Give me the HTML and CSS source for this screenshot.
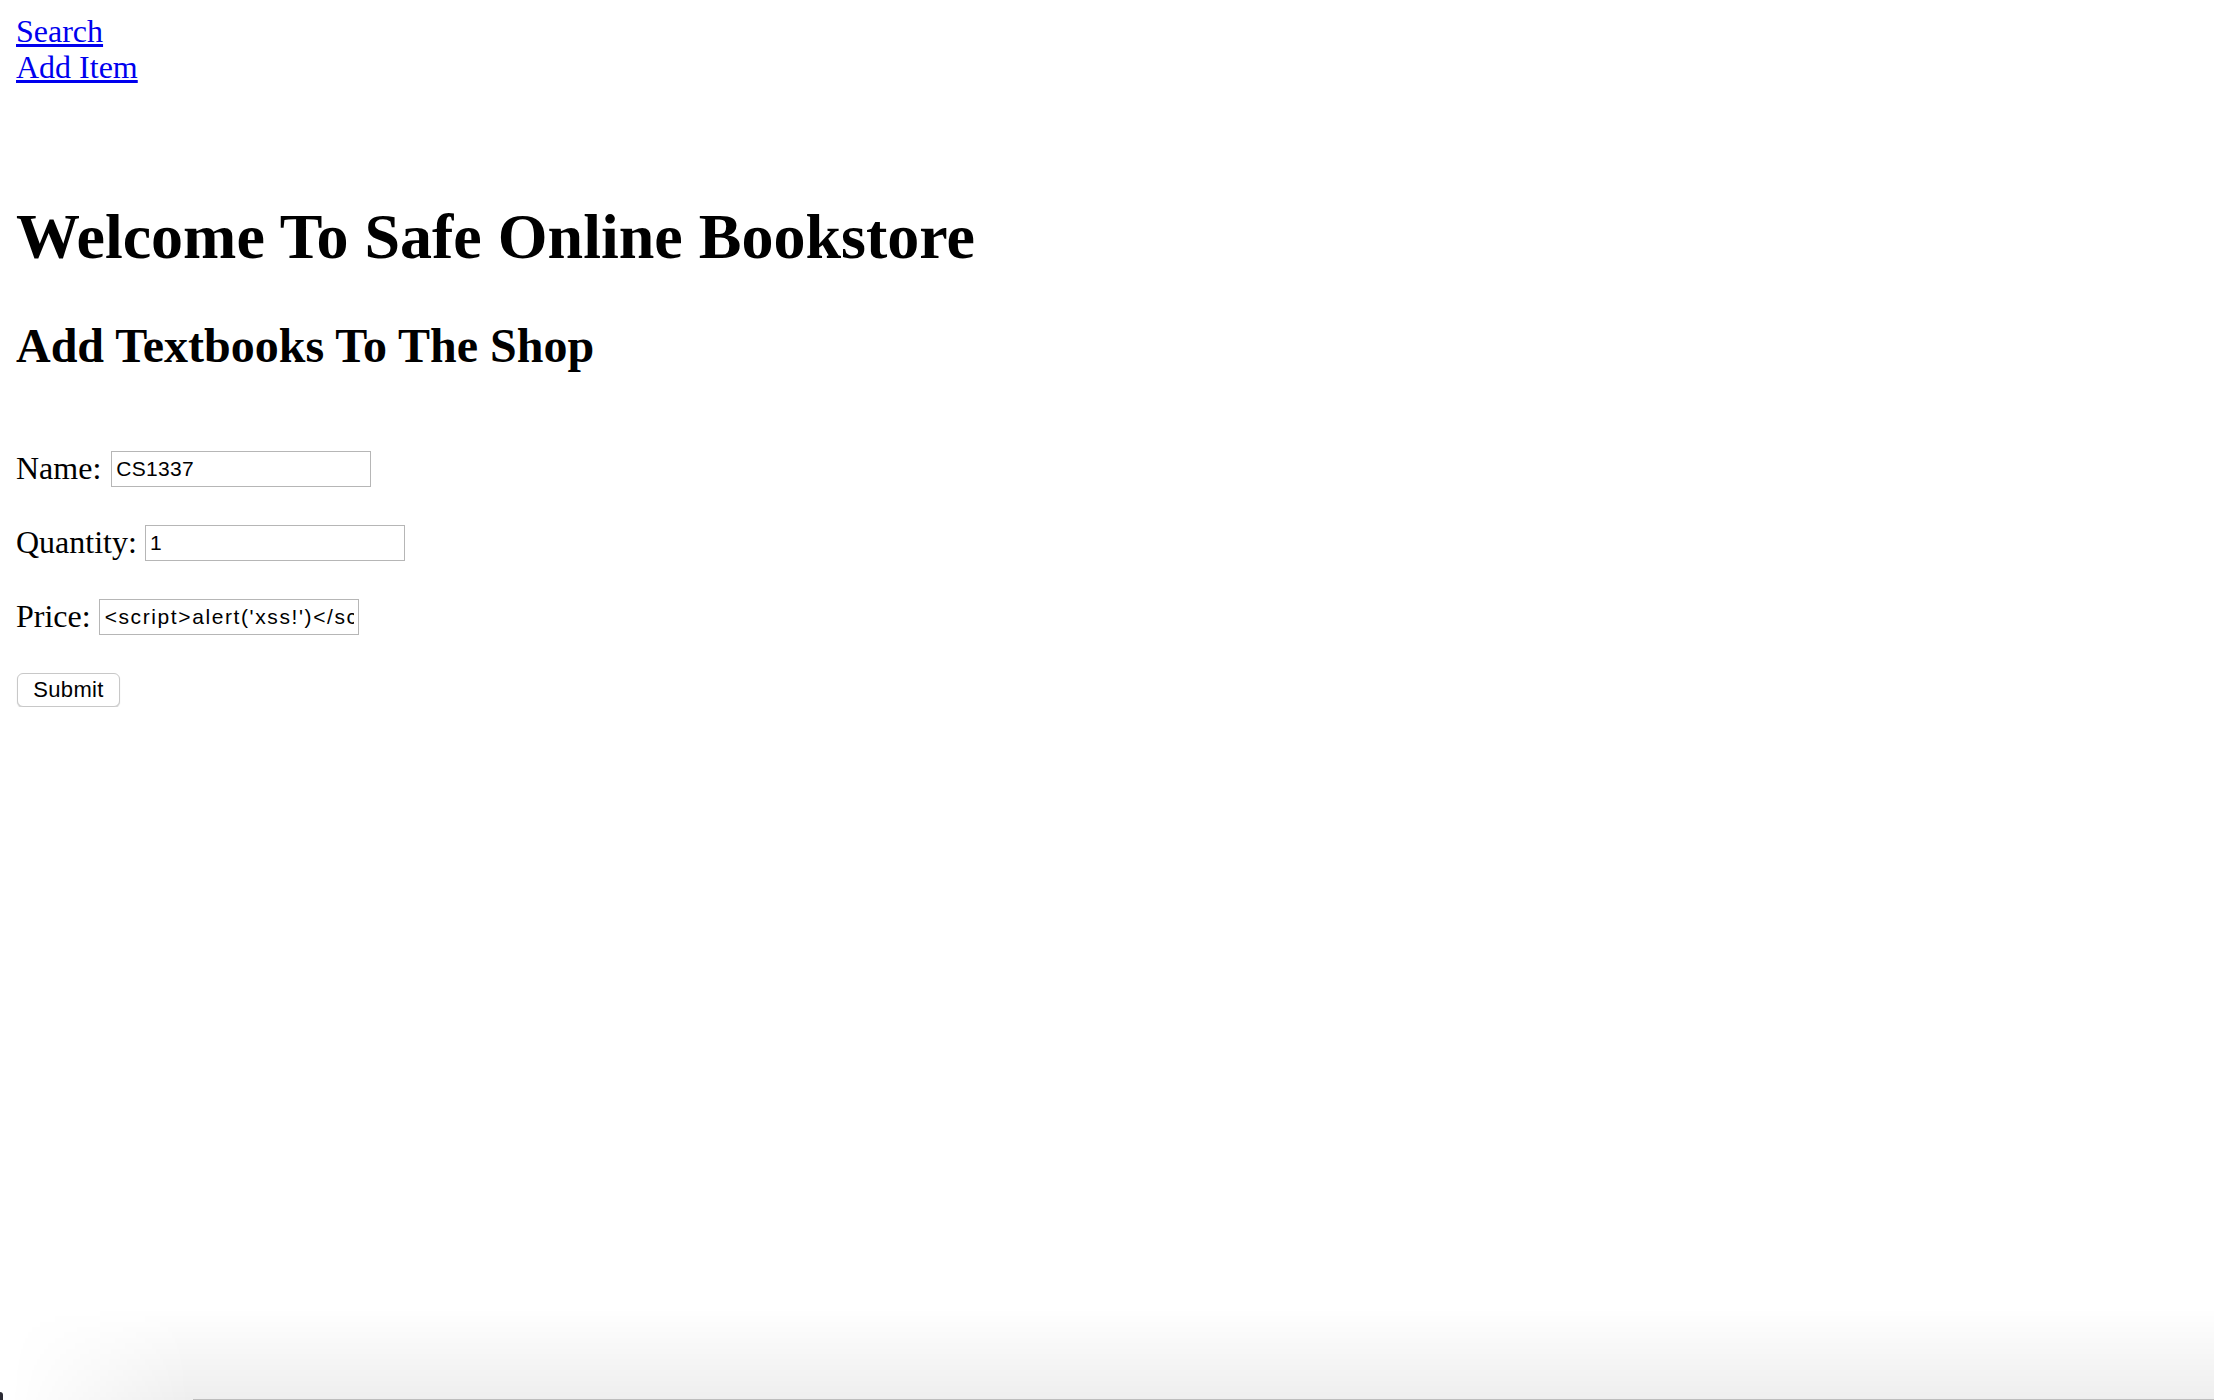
FILE: index.html
```html
<!DOCTYPE html>
<html lang="en">
<head>
<meta charset="utf-8">
<title>Safe Online Bookstore</title>
<link rel="stylesheet" href="styles.css">
</head>
<body>
<nav class="nav">
  <a class="nav-link" href="#">Search</a>
  <a class="nav-link" href="#">Add Item</a>
</nav>
<h1 class="title">Welcome To Safe Online Bookstore</h1>
<h2 class="subtitle">Add Textbooks To The Shop</h2>
<form class="form">
  <div class="row row-name"><label class="label" for="name">Name:</label><input class="field" id="name" type="text" value="CS1337"></div>
  <div class="row"><label class="label" for="qty">Quantity:</label><input class="field" id="qty" type="text" value="1"></div>
  <div class="row"><label class="label" for="price">Price:</label><input class="field field-code" id="price" type="text" value="&lt;script&gt;alert('xss!')&lt;/script&gt;"></div>
  <button class="submit" type="button">Submit</button>
</form>
<div class="dock-shadow"><div class="dock-line"></div></div>
<div class="corner"></div>
</body>
</html>
```
FILE: styles.css
```css
html, body {
  background: #ffffff;
}
body {
  margin: 13px 16px;
  font-family: "Liberation Serif", "Times New Roman", serif;
  font-size: 32px;
  color: #000;
  overflow: hidden;
}
.nav {
  display: flex;
  flex-direction: column;
  align-items: flex-start;
}
.nav-link {
  color: #0000ee;
  text-decoration: underline;
  line-height: 36px;
}
.title {
  margin: 115px 0 0;
  font-size: 64px;
  line-height: 74px;
  font-weight: bold;
}
.subtitle {
  margin: 44px 0 0;
  font-size: 48px;
  line-height: 55px;
  font-weight: bold;
}
.form {
  margin-top: 78px;
  display: flex;
  flex-direction: column;
  align-items: flex-start;
}
.row {
  display: flex;
  align-items: center;
  gap: 8px;
  height: 36px;
  margin-bottom: 38px;
}
.row-name {
  gap: 10px;
}
.label {
  line-height: 36px;
  position: relative;
  top: -1px;
}
.field {
  box-sizing: border-box;
  width: 260px;
  height: 36px;
  margin: 0;
  padding: 0 4px;
  border: 1px solid #b6b6b6;
  border-radius: 0;
  font-family: "Liberation Sans", Arial, sans-serif;
  font-size: 21px;
  letter-spacing: 0.3px;
  color: #000;
  background: #fff;
  outline: none;
}
.field-code {
  padding-left: 5px;
  letter-spacing: 1.6px;
}
.submit {
  box-sizing: border-box;
  margin: 0 0 0 1px;
  width: 103px;
  height: 34px;
  padding: 0;
  border: 1px solid #c8c8c8;
  border-radius: 6px;
  background: #fff;
  box-shadow: 0 1px 1px rgba(0, 0, 0, 0.18);
  font-family: "Liberation Sans", Arial, sans-serif;
  font-size: 22px;
  letter-spacing: 0.3px;
  color: #000;
}
.dock-shadow {
  position: fixed;
  left: 0;
  right: 0;
  bottom: 0;
  height: 92px;
  background: linear-gradient(to bottom, rgba(0, 0, 0, 0), rgba(0, 0, 0, 0.065));
  -webkit-mask-image: linear-gradient(to right, transparent 10px, #000 190px);
  mask-image: linear-gradient(to right, transparent 10px, #000 190px);
}
.dock-line {
  position: absolute;
  left: 193px;
  right: 0;
  bottom: 0;
  height: 1px;
  background: #bdbdbd;
}
.corner {
  position: fixed;
  left: 0;
  bottom: 0;
  width: 3px;
  height: 8px;
  background: #2a2a33;
  border-top-right-radius: 3px;
}
```
